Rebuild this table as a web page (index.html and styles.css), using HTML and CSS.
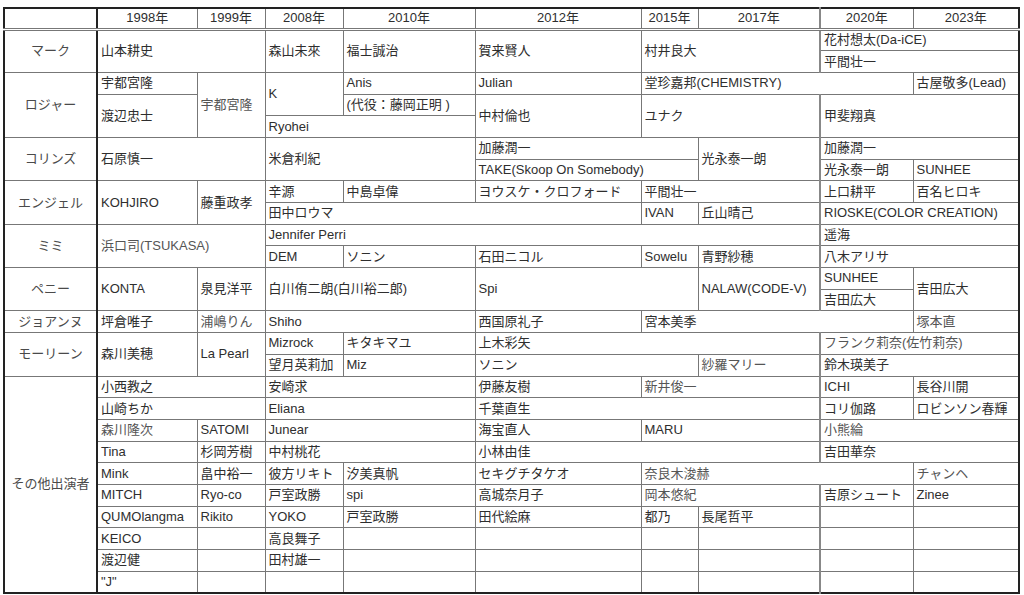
FILE: index.html
```html
<!DOCTYPE html>
<html lang="ja">
<head>
<meta charset="utf-8">
<title>キャスト一覧</title>
<link rel="stylesheet" href="styles.css">
</head>
<body>
<table class="cast">
<colgroup>
<col class="c-role"><col class="c1998"><col class="c1999"><col class="c2008"><col class="c2010"><col class="c2012"><col class="c2015"><col class="c2017"><col class="c2020"><col class="c2023">
</colgroup>
<thead>
<tr class="head"><th></th><th>1998年</th><th>1999年</th><th>2008年</th><th>2010年</th><th>2012年</th><th>2015年</th><th>2017年</th><th>2020年</th><th>2023年</th></tr>
</thead>
<tbody>
<tr><th rowspan="2" class="role">マーク</th><td colspan="2" rowspan="2">山本耕史</td><td rowspan="2">森山未來</td><td rowspan="2">福士誠治</td><td rowspan="2">賀来賢人</td><td colspan="2" rowspan="2">村井良大</td><td colspan="2">花村想太(Da-iCE)</td></tr>
<tr><td colspan="2">平間壮一</td></tr>

<tr><th rowspan="3" class="role">ロジャー</th><td>宇都宮隆</td><td rowspan="3" class="dim">宇都宮隆</td><td rowspan="2">K</td><td>Anis</td><td>Julian</td><td colspan="3">堂珍嘉邦(CHEMISTRY)</td><td>古屋敬多(Lead)</td></tr>
<tr><td rowspan="2">渡辺忠士</td><td>(代役：藤岡正明 )</td><td rowspan="2">中村倫也</td><td colspan="2" rowspan="2">ユナク</td><td colspan="2" rowspan="2">甲斐翔真</td></tr>
<tr><td colspan="2">Ryohei</td></tr>

<tr><th rowspan="2" class="role">コリンズ</th><td colspan="2" rowspan="2">石原慎一</td><td colspan="2" rowspan="2">米倉利紀</td><td colspan="2">加藤潤一</td><td rowspan="2">光永泰一朗</td><td colspan="2">加藤潤一</td></tr>
<tr><td colspan="2">TAKE(Skoop On Somebody)</td><td>光永泰一朗</td><td>SUNHEE</td></tr>

<tr><th rowspan="2" class="role">エンジェル</th><td rowspan="2">KOHJIRO</td><td rowspan="2">藤重政孝</td><td>辛源</td><td>中島卓偉</td><td>ヨウスケ・クロフォード</td><td colspan="2">平間壮一</td><td>上口耕平</td><td>百名ヒロキ</td></tr>
<tr><td colspan="3">田中ロウマ</td><td>IVAN</td><td>丘山晴己</td><td colspan="2">RIOSKE(COLOR CREATION)</td></tr>

<tr><th rowspan="2" class="role">ミミ</th><td colspan="2" rowspan="2" class="dim">浜口司(TSUKASA)</td><td colspan="5">Jennifer Perri</td><td colspan="2">遥海</td></tr>
<tr><td>DEM</td><td>ソニン</td><td>石田ニコル</td><td>Sowelu</td><td>青野紗穂</td><td colspan="2">八木アリサ</td></tr>

<tr><th rowspan="2" class="role">ペニー</th><td rowspan="2">KONTA</td><td rowspan="2">泉見洋平</td><td colspan="2" rowspan="2">白川侑二朗(白川裕二郎)</td><td colspan="2" rowspan="2">Spi</td><td rowspan="2">NALAW(CODE-V)</td><td>SUNHEE</td><td rowspan="2">吉田広大</td></tr>
<tr><td>吉田広大</td></tr>

<tr><th class="role">ジョアンヌ</th><td>坪倉唯子</td><td class="dim">浦嶋りん</td><td colspan="2">Shiho</td><td>西国原礼子</td><td colspan="3">宮本美季</td><td class="dim">塚本直</td></tr>

<tr><th rowspan="2" class="role">モーリーン</th><td rowspan="2">森川美穂</td><td rowspan="2">La Pearl</td><td>Mizrock</td><td>キタキマユ</td><td colspan="3">上木彩矢</td><td colspan="2" class="dim">フランク莉奈(佐竹莉奈)</td></tr>
<tr><td>望月英莉加</td><td>Miz</td><td colspan="2">ソニン</td><td class="dim">紗羅マリー</td><td colspan="2">鈴木瑛美子</td></tr>

<tr><th rowspan="10" class="role">その他出演者</th><td colspan="2">小西教之</td><td colspan="2">安崎求</td><td>伊藤友樹</td><td colspan="2" class="dim">新井俊一</td><td>ICHI</td><td>長谷川開</td></tr>
<tr><td colspan="2">山崎ちか</td><td colspan="2">Eliana</td><td colspan="3">千葉直生</td><td>コリ伽路</td><td>ロビンソン春輝</td></tr>
<tr><td class="dim">森川隆次</td><td>SATOMI</td><td colspan="2">Junear</td><td>海宝直人</td><td colspan="2">MARU</td><td colspan="2" class="dim">小熊綸</td></tr>
<tr><td>Tina</td><td>杉岡芳樹</td><td colspan="2">中村桃花</td><td colspan="3">小林由佳</td><td colspan="2">吉田華奈</td></tr>
<tr><td>Mink</td><td>畠中裕一</td><td>彼方リキト</td><td>汐美真帆</td><td>セキグチタケオ</td><td colspan="3" class="dim">奈良木浚赫</td><td class="dim">チャンヘ</td></tr>
<tr><td>MITCH</td><td>Ryo-co</td><td>戸室政勝</td><td>spi</td><td>高城奈月子</td><td colspan="2" class="dim">岡本悠紀</td><td>吉原シュート</td><td>Zinee</td></tr>
<tr><td>QUMOlangma</td><td>Rikito</td><td>YOKO</td><td>戸室政勝</td><td>田代絵麻</td><td>都乃</td><td>長尾哲平</td><td></td><td></td></tr>
<tr><td>KEICO</td><td></td><td>高良舞子</td><td></td><td></td><td></td><td></td><td></td><td></td></tr>
<tr><td>渡辺健</td><td></td><td>田村雄一</td><td></td><td></td><td></td><td></td><td></td><td></td></tr>
<tr><td>"J"</td><td></td><td></td><td></td><td></td><td></td><td></td><td></td><td></td></tr>
</tbody>
</table>
</body>
</html>
```

FILE: styles.css
```css
html, body {
  margin: 0;
  padding: 0;
  background: #ffffff;
}

body {
  font-family: "Liberation Sans", "Noto Sans CJK JP", sans-serif;
  color: #2e2e2e;
}

.cast {
  border-collapse: collapse;
  table-layout: fixed;
  width: 1016px;
  margin: 7px 0 0 3px;
  border: 2px solid #222222;
  font-size: 13px;
}

.c-role { width: 93px; border-right: 2px solid #222222; }
.c1998 { width: 100px; }
.c1999 { width: 68px; }
.c2008 { width: 78px; }
.c2010 { width: 132px; }
.c2012 { width: 166px; }
.c2015 { width: 57px; }
.c2017 { width: 122px; }
.c2020 { width: 93px; border-left: 2px solid #888888; }
.c2023 { width: 106px; }

.cast tr {
  height: 21.7px;
}

.cast td,
.cast th {
  border: 1px solid #777777;
  padding: 0 3px;
  line-height: 16px;
  white-space: nowrap;
  overflow: hidden;
  text-align: left;
  font-weight: normal;
  vertical-align: middle;
}

.cast thead tr {
  height: 21px;
  border-bottom: 3px double #777777;
}

.head th {
  text-align: center;
}

.cast .role {
  text-align: center;
  color: #4a4a4a;
}

.dim {
  color: #555555;
}
```
